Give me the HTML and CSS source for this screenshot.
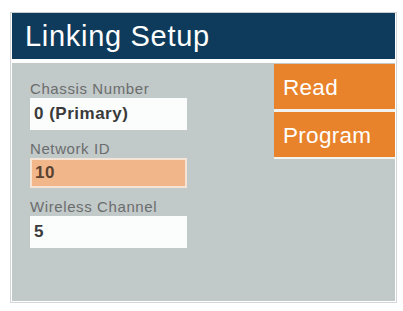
FILE: index.html
```html
<!DOCTYPE html>
<html lang="en">
<head>
<meta charset="UTF-8">
<meta name="viewport" content="width=device-width, initial-scale=1.0">
<title>Linking Setup</title>
<link rel="stylesheet" href="styles.css">
</head>
<body>

<div class="panel">
    <div class="title-bar">Linking Setup</div>
    <div class="content">
        <div class="fields">
            <div class="field-group">
                <div class="field-label">Chassis Number</div>
                <div class="field-value">0 (Primary)</div>
            </div>
            <div class="field-group">
                <div class="field-label">Network ID</div>
                <div class="field-value selected">10</div>
            </div>
            <div class="field-group">
                <div class="field-label">Wireless Channel</div>
                <div class="field-value">5</div>
            </div>
        </div>
        <div class="actions">
            <button class="btn">Read</button>
            <button class="btn">Program</button>
        </div>
    </div>
</div>

</body>
</html>
```

FILE: styles.css
```css
body {
    margin: 0;
    padding: 0;
    font-family: "Liberation Sans", Arial, sans-serif;
    background-color: #fff;
}
.panel {
    width: 383px;
    margin: 12px 0 0 10px;
    padding: 0 1px 1px 1px;
    border: 1px solid #d3d7d7;
    border-top-color: #c9cdcd;
    background-color: #fff;
}
.title-bar {
    height: 46px;
    padding-left: 13px;
    line-height: 46px;
    font-size: 29px;
    letter-spacing: 0.7px;
    color: #fff;
    background-color: #0e3b5b;
}
.content {
    display: flex;
    justify-content: space-between;
    height: 238px;
    margin-top: 4px;
    background-color: #c2c9c9;
}
.fields {
    display: flex;
    flex-direction: column;
    gap: 11px;
    padding: 18px 0 0 18px;
}
.field-label {
    height: 16px;
    margin-bottom: 1px;
    line-height: 16px;
    font-size: 15px;
    letter-spacing: 0.6px;
    color: #6a6d6d;
}
.field-value {
    box-sizing: border-box;
    width: 157px;
    height: 32px;
    padding-left: 4px;
    line-height: 32px;
    font-size: 17px;
    font-weight: bold;
    letter-spacing: 0.5px;
    color: #3a3a3a;
    background-color: #fbfdfc;
}
.field-value.selected {
    height: 30px;
    line-height: 26px;
    padding-left: 3px;
    border: 2px solid #f5e4d6;
    color: #5a4230;
    background-color: #f2b68b;
}
.actions {
    display: flex;
    flex-direction: column;
    padding-top: 1px;
}
.btn {
    box-sizing: content-box;
    width: 112px;
    height: 43px;
    padding: 2px 0 0 9px;
    border: none;
    border-bottom: 3px solid #f2f2ef;
    text-align: left;
    line-height: 43px;
    font-family: "Liberation Sans", Arial, sans-serif;
    font-size: 22.5px;
    letter-spacing: 0.3px;
    color: #fff;
    background-color: #e8832b;
    cursor: pointer;
}
.btn + .btn {
    border-bottom-width: 2px;
}
```
